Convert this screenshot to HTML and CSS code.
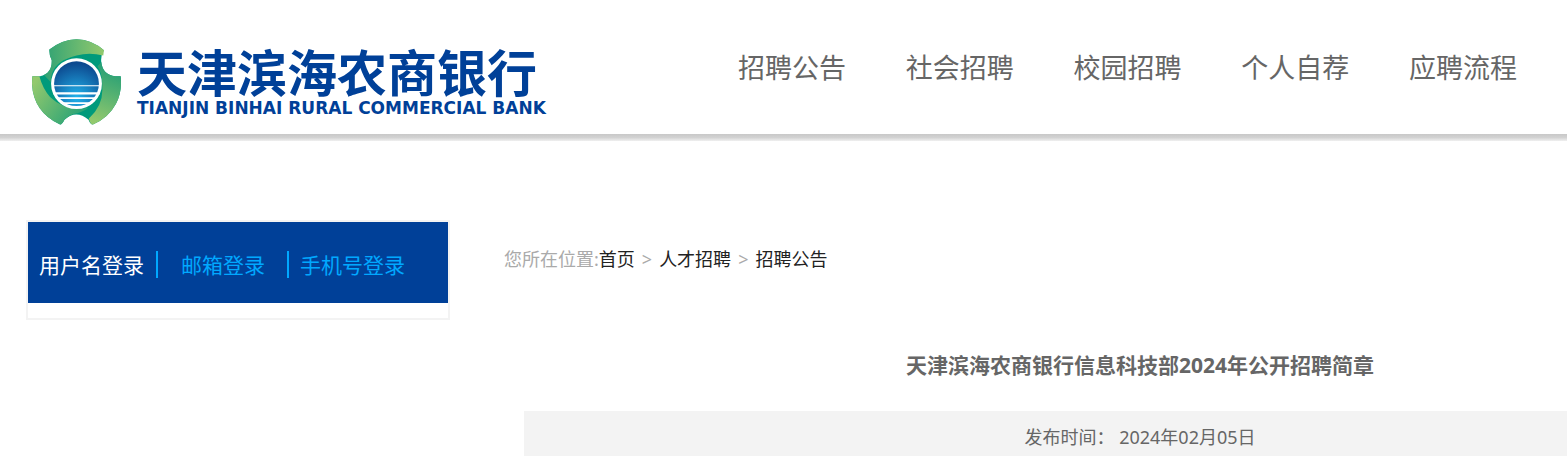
FILE: index.html
```html
<!DOCTYPE html>
<html lang="zh-CN">
<head>
    <meta charset="UTF-8">
    <meta name="viewport" content="width=device-width, initial-scale=1.0">
    <title>天津滨海农商银行 - 招聘公告</title>
    <link rel="stylesheet" href="styles.css">
</head>
<body>
    <header class="header">
        <a class="logo" href="#">
            <svg class="logo-mark" viewBox="36 27 266 256" aria-hidden="true">
                <defs>
                    <linearGradient id="top" x1="0" y1="0" x2="1" y2="0">
                        <stop offset="0" stop-color="#2fa274"/>
                        <stop offset="1" stop-color="#93c96d"/>
                    </linearGradient>
                    <linearGradient id="left" x1="0" y1="0.2" x2="1" y2="0.8">
                        <stop offset="0" stop-color="#93c96d"/>
                        <stop offset="1" stop-color="#1f9f77"/>
                    </linearGradient>
                    <linearGradient id="right" x1="0.6" y1="0" x2="0.4" y2="1">
                        <stop offset="0" stop-color="#1f9c76"/>
                        <stop offset="0.4" stop-color="#4cae72"/>
                        <stop offset="1" stop-color="#93c96d"/>
                    </linearGradient>
                    <radialGradient id="sea" cx="0.5" cy="0.8" r="0.75">
                        <stop offset="0" stop-color="#22b2ea"/>
                        <stop offset="1" stop-color="#0d4a90"/>
                    </radialGradient>
                </defs>
                <path fill="#009a7b" d="M88 58Q125 28 169 27Q215 28 251 60Q241 75 243 95Q247 133 285 138H301Q306 185 287 220Q265 262 218 282Q210 282 205 268Q168 237 133 268Q126 282 120 282Q40 245 36 160L37 138H60Q97 130 95 90Q87 75 88 58Z"/>
                <path fill="url(#top)" d="M88 58Q125 28 169 27Q215 28 251 60L249 76Q190 60 130 90Q92 112 92 155Q82 145 72 134Q97 122 95 90Q87 75 88 58Z"/>
                <path fill="url(#left)" d="M37 138H58Q68 175 90 200Q135 244 205 232Q185 247 160 251Q145 256 133 268Q126 282 120 282Q40 245 36 160Z"/>
                <path fill="url(#right)" d="M243 95Q247 133 285 138H301Q306 185 287 220Q265 262 218 282Q210 282 206 264Q250 225 246 170Q247 130 232 108Z"/>
                <circle cx="169" cy="160" r="76" fill="#fff"/>
                <circle cx="169" cy="160" r="67" fill="url(#sea)"/>
                <path stroke="#fff" fill="none" stroke-width="3" d="M98 166H240"/>
                <path stroke="#fff" fill="none" stroke-width="6" d="M100 189H238"/>
                <path stroke="#fff" fill="none" stroke-width="5" d="M110 203H228M122 218H216"/>
            </svg>
            <span class="logo-text">
                <span class="logo-cn">天津滨海农商银行</span>
                <span class="logo-en">TIANJIN BINHAI RURAL COMMERCIAL BANK</span>
            </span>
        </a>
        <nav class="nav">
            <a href="#">招聘公告</a>
            <a href="#">社会招聘</a>
            <a href="#">校园招聘</a>
            <a href="#">个人自荐</a>
            <a href="#">应聘流程</a>
        </nav>
    </header>
    <div class="header-shadow"></div>

    <div class="container">
        <aside class="login-box">
            <div class="login-tabs">
                <button type="button" class="active">用户名登录</button>
                <button type="button" class="mail">邮箱登录</button>
                <button type="button">手机号登录</button>
            </div>
        </aside>

        <main class="main">
            <div class="location">
                <span>您所在位置:</span><a href="#">首页</a><span class="sep">&gt;</span><a href="#">人才招聘</a><span class="sep">&gt;</span><a href="#">招聘公告</a>
            </div>
            <article class="article">
                <h1>天津滨海农商银行信息科技部2024年公开招聘简章</h1>
                <p class="info">发布时间： 2024年02月05日</p>
            </article>
        </main>
    </div>
</body>
</html>
```

FILE: styles.css
```css
body {
    margin: 0;
    font-family: "Noto Sans", "Noto Sans CJK SC", sans-serif;
    background-color: #fff;
    color: #666;
}

a {
    color: inherit;
    text-decoration: none;
}

.header {
    display: flex;
    justify-content: space-between;
    align-items: flex-start;
    height: 134px;
    padding: 0 50px 0 32px;
    box-sizing: border-box;
}

.header-shadow {
    height: 7px;
    background: linear-gradient(#c8c8c8, #d2d2d2 50%, #f0f0f0);
}

.logo {
    display: flex;
    gap: 16px;
    padding-top: 39px;
    color: #004098;
}

.logo-mark {
    width: 89px;
    height: 86px;
}

.logo-text {
    display: flex;
    flex-direction: column;
    padding-top: 6px;
    white-space: nowrap;
}

.logo-cn {
    font-family: "Noto Sans CJK SC", sans-serif;
    font-size: 50px;
    font-weight: 700;
    line-height: 50px;
}

.logo-en {
    font-family: "DejaVu Sans", sans-serif;
    font-size: 17px;
    font-weight: 700;
    line-height: 26px;
}

.nav {
    display: flex;
    justify-content: space-between;
    width: 779px;
    padding-top: 47px;
    font-family: "Noto Sans CJK SC", sans-serif;
    font-size: 27px;
    line-height: 40px;
    white-space: nowrap;
}

.container {
    display: flex;
    align-items: flex-start;
    padding: 79px 0 0 26px;
}

.login-box {
    flex: none;
    width: 420px;
    padding-bottom: 15px;
    border: 2px solid #f3f3f3;
}

.login-tabs {
    display: flex;
    align-items: center;
    height: 81px;
    padding-top: 4px;
    box-sizing: border-box;
    background-color: #004098;
}

.login-tabs button {
    padding: 0 12px 0 11px;
    border: none;
    border-right: 2px solid #00a8ff;
    background: none;
    color: #00a8ff;
    font-family: "Noto Sans CJK SC", sans-serif;
    font-size: 21px;
    line-height: 27px;
    cursor: pointer;
}

.login-tabs .active {
    color: #fff;
}

.login-tabs .mail {
    padding: 0 22px 0 23px;
}

.login-tabs button:last-child {
    border-right: none;
}

.main {
    flex: 1;
    padding: 25px 0 0 54px;
}

.location {
    color: #aaa;
    font-size: 18px;
    line-height: 28px;
}

.location a {
    color: #222;
}

.location .sep {
    margin: 0 7px;
}

.article {
    margin: 76px 0 0 20px;
    text-align: center;
}

.article h1 {
    margin: 0 0 30px;
    padding-left: 189px;
    font-size: 21px;
    line-height: 32px;
}

.info {
    margin: 0;
    padding: 12px 0 12px 189px;
    background-color: #f3f3f3;
    font-size: 18px;
    line-height: 28px;
}
```
